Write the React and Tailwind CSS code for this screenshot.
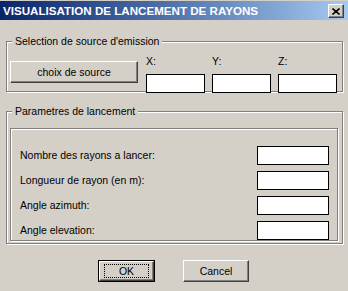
const raised =
  'border border-t-white border-l-white border-r-[#404040] border-b-[#404040] shadow-[inset_-1px_-1px_0_#808080] bg-[#d4d0c8]';
const etched = 'border border-[#808080] shadow-[inset_1px_1px_0_#fff,1px_1px_0_#fff]';

function Field({ className = '' }) {
  return <div className={`bg-white border border-black h-[19px] ${className}`} />;
}

function Row({ label }) {
  return (
    <div className="flex items-center justify-between h-[19px]">
      <span>{label}</span>
      <Field className="w-[72px]" />
    </div>
  );
}

export default function App() {
  return (
    <div className="w-[348px] h-[291px] bg-[#d4d0c8] overflow-hidden font-['Liberation_Sans',Arial,sans-serif] text-[10.5px] leading-[13px] text-black">
      {/* title bar */}
      <div className="pt-[1px]">
        <div className="h-[19px] flex items-center justify-between pl-[3px] pr-[4px] bg-gradient-to-r from-[#0a246a] to-[#a6caf0]">
          <span className="font-bold text-white text-[11.6px]">VISUALISATION DE LANCEMENT DE RAYONS</span>
          <div className={`w-[16px] h-[14px] mt-[1px] flex items-center justify-center ${raised}`}>
            <svg width="8" height="7" viewBox="0 0 8 7">
              <path d="M0.5 0.5 L7.5 6.5 M7.5 0.5 L0.5 6.5" stroke="#000" strokeWidth="1.6" fill="none" />
            </svg>
          </div>
        </div>
      </div>

      {/* source group */}
      <fieldset className={`ml-[6px] mt-[14px] w-[337px] h-[58px] ${etched}`}>
        <legend className="ml-[5px] px-[3px] leading-[14px] bg-[#d4d0c8]">Selection de source d'emission</legend>
        <div className="flex items-start pl-[3px]">
          <button className={`mt-[13px] w-[128px] h-[22px] ${raised}`}>choix de source</button>
          <div className="flex gap-[7px] ml-[8px]">
            {['X:', 'Y:', 'Z:'].map(l => (
              <div key={l} className="flex flex-col">
                <span className="mt-[7px]">{l}</span>
                <Field className="w-[59px] mt-[6px]" />
              </div>
            ))}
          </div>
        </div>
      </fieldset>

      {/* launch parameters group */}
      <fieldset className={`ml-[6px] mt-[12px] w-[337px] h-[140px] ${etched}`}>
        <legend className="ml-[5px] px-[3px] leading-[14px] bg-[#d4d0c8]">Parametres de lancement</legend>
        <div className={`ml-[3px] mt-[10px] w-[328px] h-[113px] pl-[9px] pr-[8px] pt-[17px] flex flex-col gap-[6px] ${etched}`}>
          <Row label="Nombre des rayons a lancer:" />
          <Row label="Longueur de rayon (en m):" />
          <Row label="Angle azimuth:" />
          <Row label="Angle elevation:" />
        </div>
      </fieldset>

      {/* buttons */}
      <div className="flex mt-[16px] pl-[98px] gap-[28px]">
        <div className="w-[57px] h-[22px] border border-black">
          <div className={`h-full flex items-center justify-center ${raised}`}>
            <span className="border border-dotted border-black leading-[12px] h-[14px] flex items-center w-[45px] justify-center">OK</span>
          </div>
        </div>
        <button className={`w-[66px] h-[22px] ${raised}`}>Cancel</button>
      </div>
    </div>
  );
}
